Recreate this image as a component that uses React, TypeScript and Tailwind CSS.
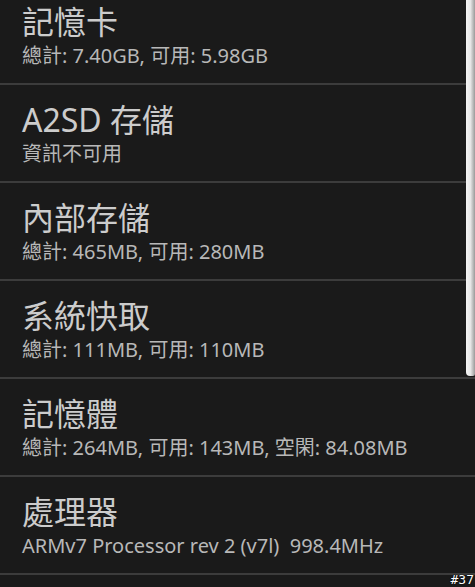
import React from "react";

const rows = [
  { t: "記憶卡", s: "總計: 7.40GB, 可用: 5.98GB" },
  { t: "A2SD 存儲", s: "資訊不可用" },
  { t: "內部存儲", s: "總計: 465MB, 可用: 280MB" },
  { t: "系統快取", s: "總計: 111MB, 可用: 110MB" },
  { t: "記憶體", s: "總計: 264MB, 可用: 143MB, 空閑: 84.08MB" },
  { t: "處理器", s: "ARMv7 Processor rev 2 (v7l)\u00a0 998.4MHz" },
];

export default function App() {
  return (
    <div
      className="relative w-[475px] h-[587px] overflow-hidden bg-[#1a1a1a]"
      style={{ fontFamily: '"Noto Sans", "Noto Sans CJK TC", sans-serif' }}
    >
      <div className="mt-[-13px] flex flex-col">
        {rows.map((r, i) => (
          <div key={i} className="flex flex-col">
            <div className="h-[96px] flex flex-col justify-center px-[22px]">
              <div className="text-[32px] leading-[40px] text-[#cccccc]">{r.t}</div>
              <div className="text-[20px] leading-[27px] text-[#b8b8b8]">{r.s}</div>
            </div>
            <div className="h-[2px] bg-[#3c3c3c]" />
          </div>
        ))}
      </div>
      <div className="absolute right-0 top-0 w-[9px] h-[376px] rounded-bl-[4px] rounded-br-[2px] bg-gradient-to-r from-[#f4f4f4] via-[#e6e6e6] to-[#9a9a9a]" />
      <div
        className="absolute right-[1px] bottom-0 text-[13px] leading-[14px] text-white"
        style={{ fontFamily: '"DejaVu Sans Mono", monospace', textShadow: "0 0 1px #000, 0 0 1px #000" }}
      >
        #37
      </div>
    </div>
  );
}
